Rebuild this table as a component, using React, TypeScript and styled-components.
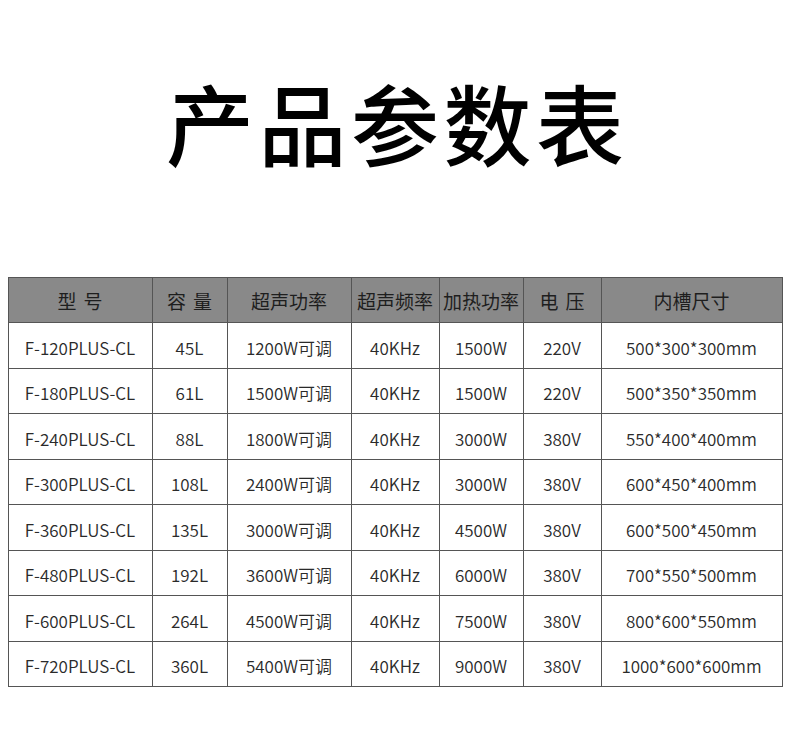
import styled, { createGlobalStyle } from "styled-components";

const GlobalStyle = createGlobalStyle`
  html, body {
    margin: 0;
    padding: 0;
    background: #ffffff;
  }
  body {
    font-family: "Noto Sans CJK SC", "Noto Sans", sans-serif;
  }
`;

const columns = [
  { title: "型号", width: 144, spaced: true },
  { title: "容量", width: 75, spaced: true },
  { title: "超声功率", width: 124 },
  { title: "超声频率", width: 88 },
  { title: "加热功率", width: 84 },
  { title: "电压", width: 78, spaced: true },
  { title: "内槽尺寸", width: 181 },
];

const rows = [
  ["F-120PLUS-CL", "45L", "1200W可调", "40KHz", "1500W", "220V", "500*300*300mm"],
  ["F-180PLUS-CL", "61L", "1500W可调", "40KHz", "1500W", "220V", "500*350*350mm"],
  ["F-240PLUS-CL", "88L", "1800W可调", "40KHz", "3000W", "380V", "550*400*400mm"],
  ["F-300PLUS-CL", "108L", "2400W可调", "40KHz", "3000W", "380V", "600*450*400mm"],
  ["F-360PLUS-CL", "135L", "3000W可调", "40KHz", "4500W", "380V", "600*500*450mm"],
  ["F-480PLUS-CL", "192L", "3600W可调", "40KHz", "6000W", "380V", "700*550*500mm"],
  ["F-600PLUS-CL", "264L", "4500W可调", "40KHz", "7500W", "380V", "800*600*550mm"],
  ["F-720PLUS-CL", "360L", "5400W可调", "40KHz", "9000W", "380V", "1000*600*600mm"],
];

export default function App() {
  return (
    <Page>
      <GlobalStyle />
      <Title>产品参数表</Title>
      <Table>
        <colgroup>
          {columns.map((c) => (
            <col key={c.title} style={{ width: c.width }} />
          ))}
        </colgroup>
        <thead>
          <tr>
            {columns.map((c) => (
              <HeadCell key={c.title} $spaced={!!c.spaced}>
                {c.title}
              </HeadCell>
            ))}
          </tr>
        </thead>
        <tbody>
          {rows.map((row) => (
            <tr key={row[0]}>
              {row.map((cell, i) => (
                <Cell key={i}>{cell}</Cell>
              ))}
            </tr>
          ))}
        </tbody>
      </Table>
    </Page>
  );
}

const Page = styled.div`
  width: 790px;
  height: 747px;
  padding: 71px 8px 0;
  box-sizing: border-box;
  display: flex;
  flex-direction: column;
  align-items: center;
`;

const Title = styled.h1`
  margin: 0;
  font-family: "Noto Sans CJK SC", sans-serif;
  font-size: 88px;
  font-weight: 500;
  line-height: 100px;
  letter-spacing: 4.5px;
  padding-left: 4.5px;
  color: #000000;
`;

const Table = styled.table`
  margin-top: 106px;
  width: 775px;
  border-collapse: collapse;
  table-layout: fixed;
  border: 1px solid #555555;
`;

const HeadCell = styled.th<{ $spaced: boolean }>`
  height: 44px;
  padding: 0 0 0 ${({ $spaced }) => ($spaced ? "7px" : "0")};
  background: #898989;
  border: 1px solid #555555;
  color: #1e1e1e;
  font-size: 19px;
  font-weight: 400;
  text-align: center;
  white-space: nowrap;
  letter-spacing: ${({ $spaced }) => ($spaced ? "7px" : "0")};
`;

const Cell = styled.td`
  height: 40.5px;
  padding: 4px 0 0;
  border: 1px solid #555555;
  color: #2a2a2a;
  font-size: 17px;
  font-weight: 350;
  text-align: center;
  white-space: nowrap;
`;
